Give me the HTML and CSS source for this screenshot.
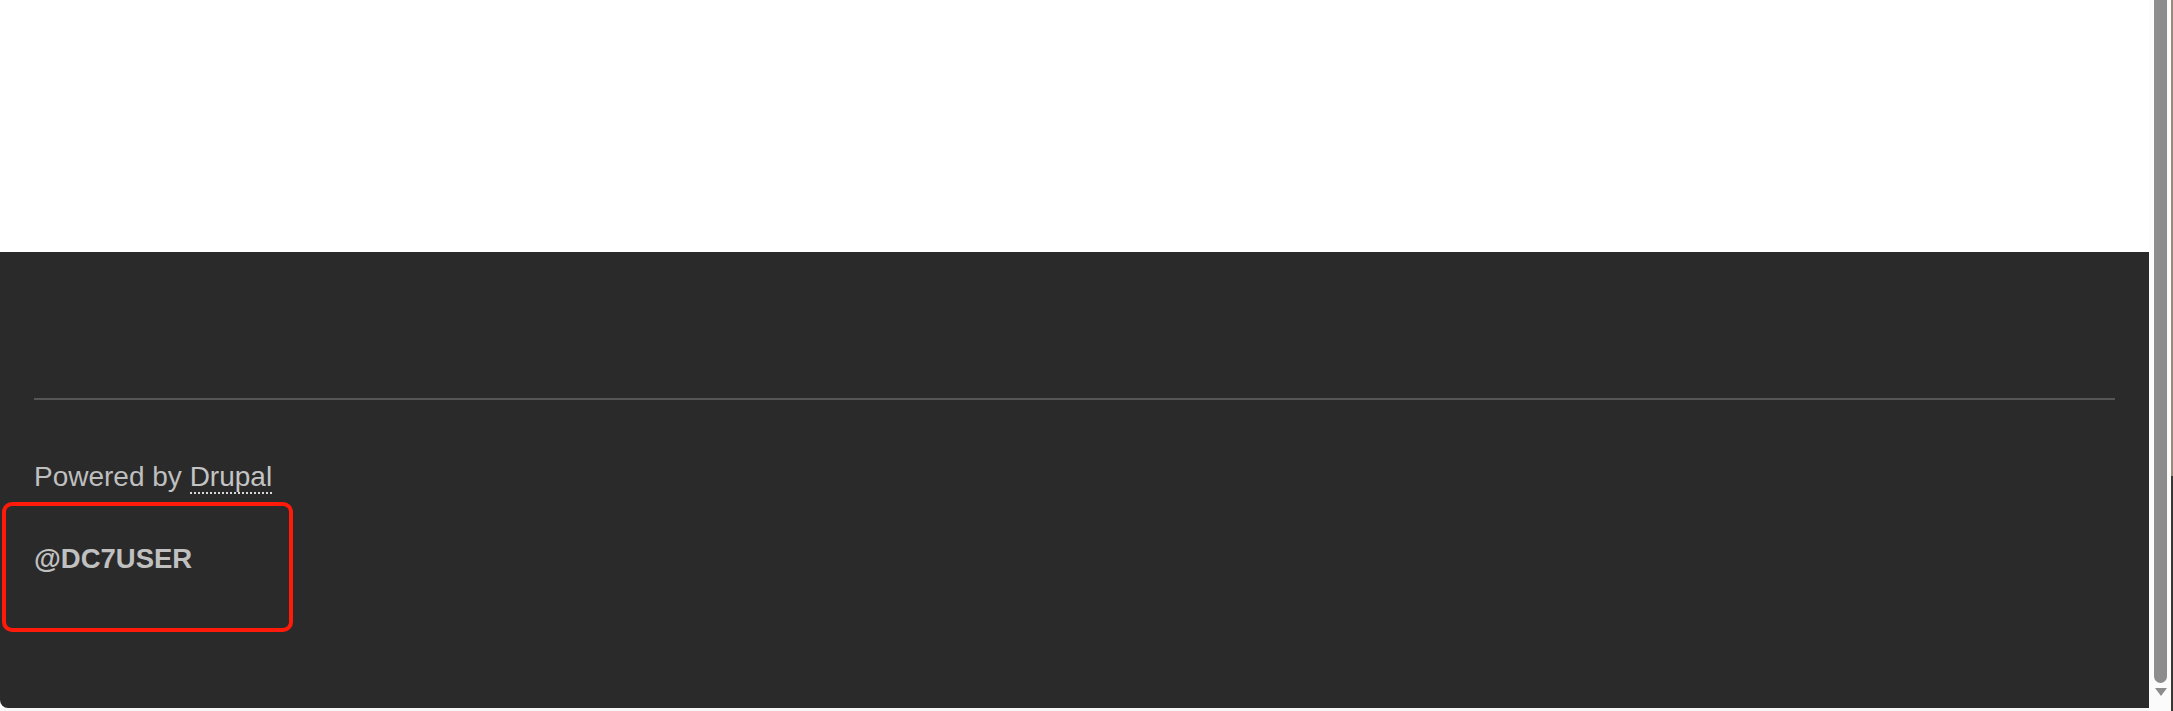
FILE: index.html
```html
<!DOCTYPE html>
<html lang="en">
<head>
  <meta charset="UTF-8">
  <meta name="viewport" content="width=device-width, initial-scale=1.0">
  <title>DC7</title>
  <link rel="stylesheet" href="styles.css">
</head>
<body>
  <div class="screen">
    <div class="page">
      <div class="content"></div>
      <footer class="site-footer">
        <hr class="rule">
        <p class="powered">Powered by <a href="#">Drupal</a></p>
        <p class="user">@DC7USER</p>
        <div class="highlight"></div>
      </footer>
      <div class="below"></div>
    </div>
    <div class="scrollbar">
      <div class="thumb"></div>
      <div class="arrow"></div>
    </div>
    <div class="edge"></div>
  </div>
</body>
</html>
```

FILE: styles.css
```css
* {
  margin: 0;
  padding: 0;
  box-sizing: border-box;
}
html, body {
  height: 100%;
  overflow: hidden;
}
body {
  background-color: #fff;
  font-family: "Liberation Sans", Arial, sans-serif;
}
.screen {
  display: flex;
  height: 711px;
}
.page {
  width: 2149px;
  display: flex;
  flex-direction: column;
}
.content {
  height: 252px;
  background-color: #fff;
}
.site-footer {
  position: relative;
  height: 456px;
  padding: 146px 34px 0;
  background-color: #2a2a2a;
  border-bottom-left-radius: 8px;
  color: #bfbfbf;
  font-size: 28px;
}
.rule {
  border: none;
  height: 2px;
  background-color: #555;
}
.powered {
  margin-top: 61px;
  line-height: 32px;
}
.powered a {
  color: #c4c4c4;
  text-decoration: none;
  border-bottom: 2px dotted #d8d8d8;
}
.user {
  margin-top: 50px;
  line-height: 32px;
  font-size: 27.5px;
  font-weight: bold;
  color: #c0c0c0;
}
.highlight {
  position: absolute;
  left: 2px;
  top: 250px;
  width: 291px;
  height: 130px;
  border: 4px solid #ff1a0a;
  border-radius: 10px;
}
.below {
  flex: 1;
  background-color: #f7f7f7;
}
.scrollbar {
  width: 22px;
  padding: 0 4px 0 5px;
  background-color: #fbfbfb;
  display: flex;
  flex-direction: column;
  align-items: center;
}
.thumb {
  width: 13px;
  height: 683px;
  background-color: #8c8c8c;
  border-radius: 0 0 7px 7px;
}
.arrow {
  margin-top: 5px;
  width: 0;
  height: 0;
  border-left: 6px solid transparent;
  border-right: 6px solid transparent;
  border-top: 8px solid #8c8c8c;
}
.edge {
  width: 2px;
  background: linear-gradient(#9a8b7c 0 476px, #3a3634 476px);
}
```
